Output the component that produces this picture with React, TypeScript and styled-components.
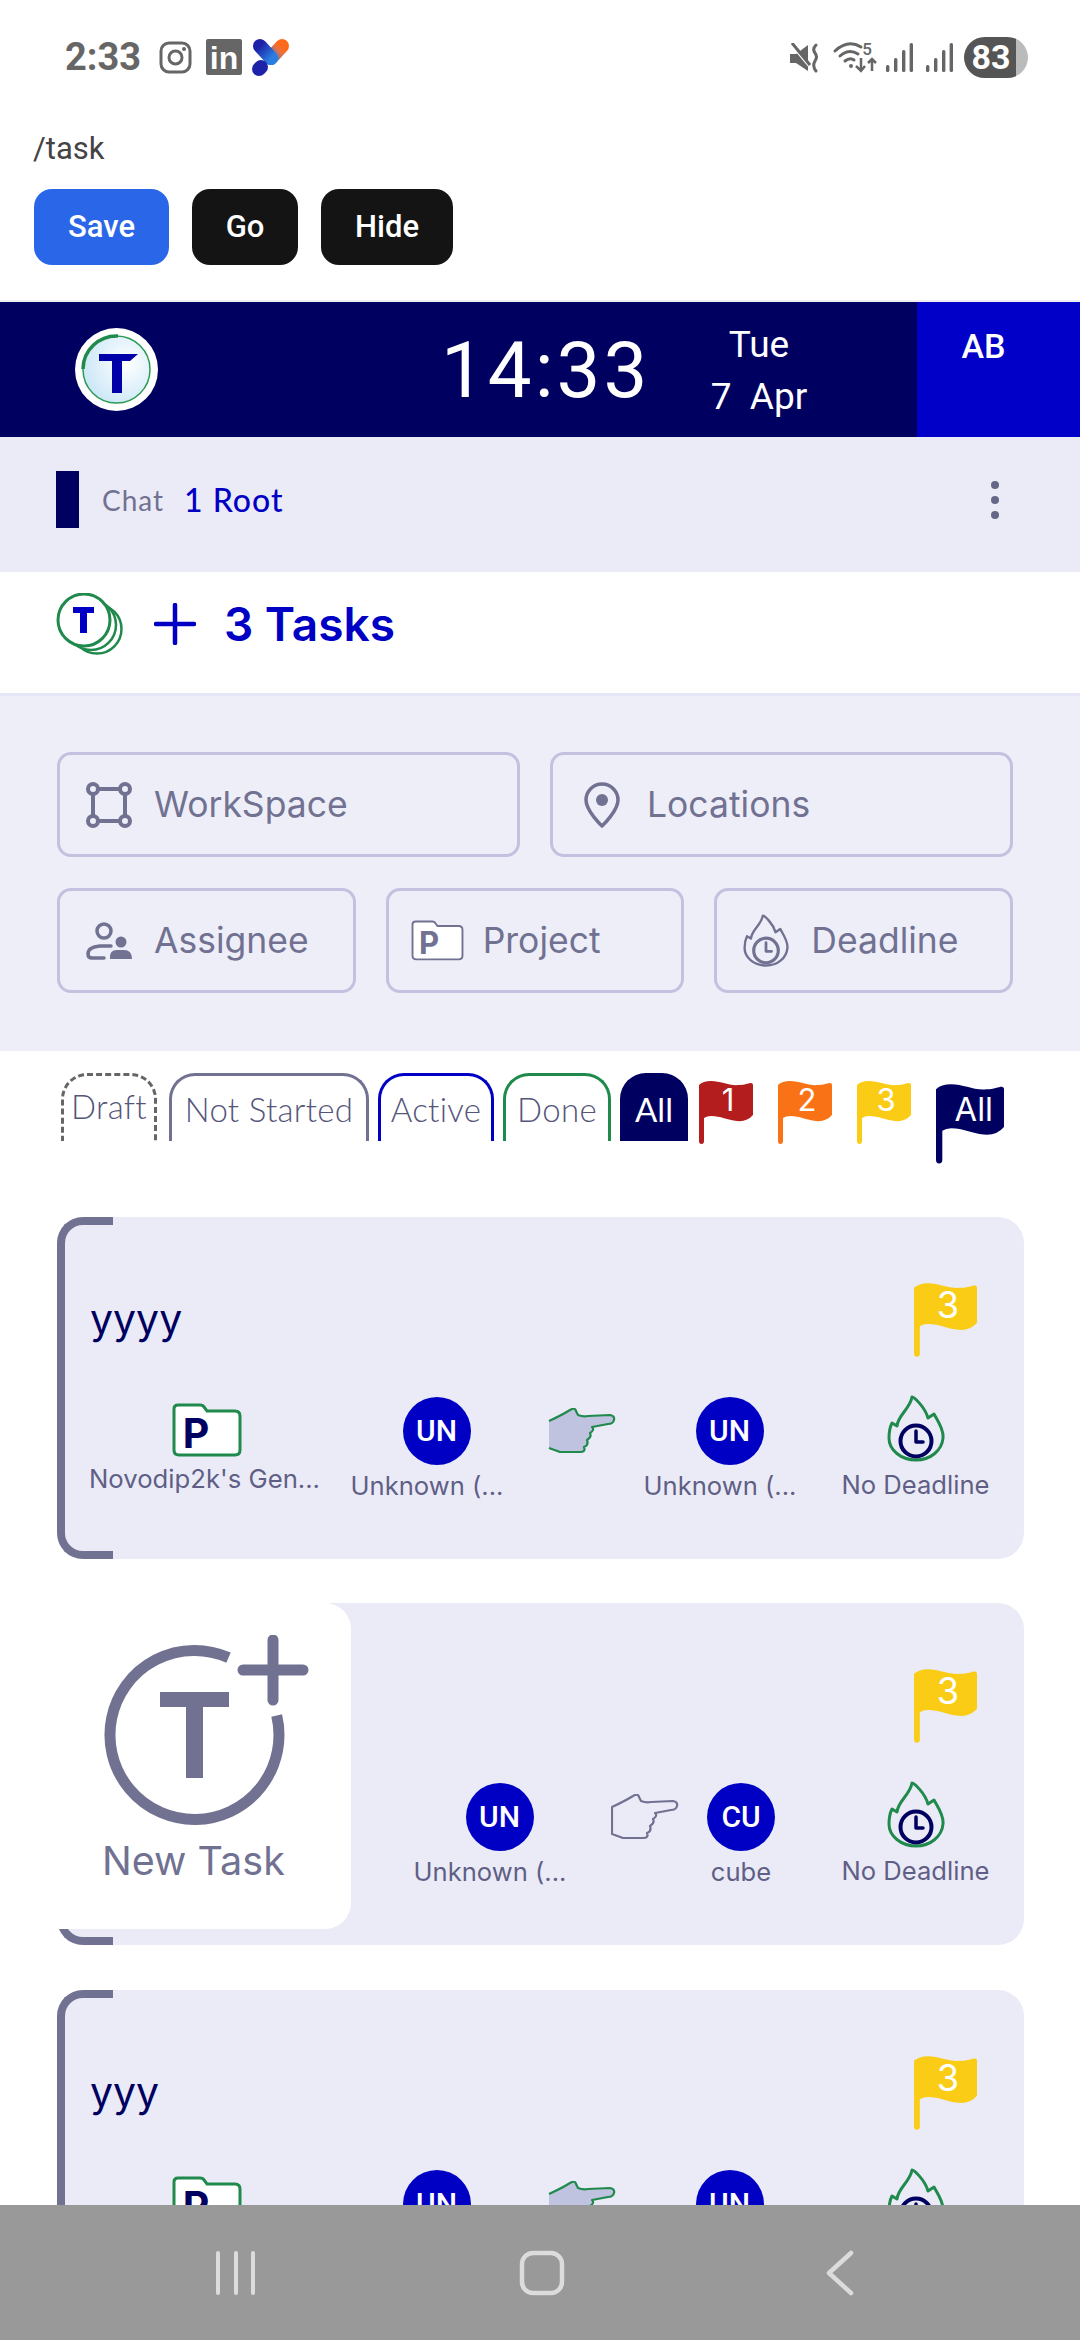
import React from 'react';
import styled, { createGlobalStyle } from 'styled-components';

const navy = '#000060';
const blue = '#0000c4';
const slate = '#717191';
const green = '#1f8a4c';

const flagPath =
  'M0 5Q4 1 12 1C22 1 30 6 40 5C46 5 50 3 52 3Q54 3 54 5V35Q48 42 38 41C28 40 22 36 12 36Q8 36 5 38V61Q5 64 2.5 64Q0 64 0 61Z';

const FlagIcon = ({ color, label, width = 54 }: { color: string; label: string; width?: number }) => (
  <svg width={width} height={(width * 64) / 54} viewBox="0 0 54 64" style={{ display: 'block', flex: 'none', overflow: 'visible' }}>
    <path d={flagPath} fill={color} />
    <text
      x={label === 'All' ? 30 : 29}
      y={label === 'All' ? 30 : 31}
      fill="#fff"
      fontFamily="Inter, sans-serif"
      fontSize={label === 'All' ? 26 : 31}
      textAnchor="middle"
    >
      {label}
    </text>
  </svg>
);

const FolderIcon = ({ stroke, letter, width, strokeWidth }: { stroke: string; letter: string; width: number; strokeWidth: number }) => (
  <svg width={width} height={(width * 54) / 70} viewBox="0 0 70 54" style={{ display: 'block', flex: 'none', overflow: 'visible' }}>
    <path
      d="M6 2H28Q31 2 32 4L35 8H63Q68 8 68 13V47Q68 52 63 52H7Q2 52 2 47V6Q2 2 6 2Z"
      fill="#fff"
      stroke={stroke}
      strokeWidth={strokeWidth}
    />
    <text x="24" y="44.5" fill={letter} fontFamily="Inter, sans-serif" fontWeight="700" fontSize="41" textAnchor="middle">
      P
    </text>
  </svg>
);

const FlameIcon = ({ stroke, clock, width = 58 }: { stroke: string; clock: string; width?: number }) => (
  <svg width={width} height={(width * 67) / 58} viewBox="0 0 58 67" fill="none" style={{ display: 'block', flex: 'none' }}>
    <path
      d="M25 2C27 2 38 12 41 23L47 19C50 25 57 34 56 43C55 55 44 65 29 65C14 65 2 55 2 43C2 37 3 32 5 28L10 31C11 20 23 14 25 2Z"
      stroke={stroke}
      strokeWidth="3"
      strokeLinejoin="round"
    />
    <circle cx="29" cy="46" r="15.5" stroke={clock} strokeWidth="4" />
    <path d="M29 36V47H36" stroke={clock} strokeWidth="3.5" strokeLinecap="round" strokeLinejoin="round" />
  </svg>
);

const HandIcon = ({ fill, stroke, closed }: { fill: string; stroke: string; closed?: boolean }) => (
  <svg width="68" height="46" viewBox="0 0 68 46" fill="none" style={{ display: 'block' }}>
    <path
      d={
        'M1 13Q14 7 22 2Q27 -1 28 3L30 7Q35 9 40 8L62 7Q67 8 66 12Q65 16 60 16L44 19Q47 22 42 25Q44 29 39 32Q41 37 36 39Q38 44 32 44L12 44L1 40' +
        (closed ? 'Z' : '')
      }
      fill={fill}
      stroke={stroke}
      strokeWidth="2.2"
      strokeLinejoin="round"
    />
  </svg>
);

const TaskItem = ({ project, from, to, toLabel, active }: {
  project?: boolean;
  from: string;
  to: string;
  toLabel: string;
  active: boolean;
}) => (
  <Meta>
    {project && (
      <ProjectCell>
        <IconSlot>
          <FolderIcon stroke={green} letter={navy} width={70} strokeWidth={3} />
        </IconSlot>
        <ProjectLabel>Novodip2k's Gen...</ProjectLabel>
      </ProjectCell>
    )}
    <PersonCell>
      <Avatar $shift>{from}</Avatar>
      <CellLabel>Unknown (...</CellLabel>
    </PersonCell>
    <HandSlot>
      {active ? <HandIcon fill="#bfc3df" stroke={green} /> : <HandIcon fill="none" stroke={slate} closed />}
    </HandSlot>
    <PersonCell $compact={toLabel === 'cube'}>
      <Avatar $shift={toLabel !== 'cube'}>{to}</Avatar>
      <CellLabel>{toLabel}</CellLabel>
    </PersonCell>
    <DeadlineCell>
      <FlameIcon stroke={green} clock={navy} />
      <CellLabel>No Deadline</CellLabel>
    </DeadlineCell>
  </Meta>
);

export default function App() {
  return (
    <Page>
      <GlobalStyle />
      <StatusBar>
        <StatusLeft>
          <Clock>2:33</Clock>
          <svg width="33" height="33" viewBox="0 0 33 33" fill="none">
            <rect x="2" y="2" width="29" height="29" rx="8" stroke="#666" strokeWidth="3" />
            <circle cx="16.5" cy="16.5" r="6.5" stroke="#666" strokeWidth="3" />
            <circle cx="25" cy="8" r="2" fill="#666" />
          </svg>
          <svg width="36" height="36" viewBox="0 0 36 36" style={{ overflow: 'visible' }}>
            <rect width="36" height="36" rx="2" fill="#666" />
            <text x="18" y="30" fill="#fff" fontFamily="Liberation Sans, sans-serif" fontWeight="700" fontSize="32" textAnchor="middle">
              in
            </text>
          </svg>
          <LogoMark width="38" height="39" viewBox="0 0 38 39" fill="none">
            <defs>
              <linearGradient id="logoA" x1="0" y1="0" x2="1" y2="1">
                <stop offset="0" stopColor="#1e22a8" />
                <stop offset="1" stopColor="#2a7de1" />
              </linearGradient>
              <linearGradient id="logoB" x1="0" y1="1" x2="1" y2="0">
                <stop offset="0" stopColor="#2a7de1" />
                <stop offset="0.7" stopColor="#f0703a" />
                <stop offset="1" stopColor="#ff6a1a" />
              </linearGradient>
            </defs>
            <path d="M19 20L30 8" stroke="url(#logoB)" strokeWidth="14" strokeLinecap="round" />
            <path d="M8 8L19 20" stroke="url(#logoA)" strokeWidth="14" strokeLinecap="round" />
            <path d="M7 31L9 29" stroke="#1e22a8" strokeWidth="14" strokeLinecap="round" />
          </LogoMark>
        </StatusLeft>
        <StatusRight>
          <svg width="30" height="30" viewBox="0 0 30 30" fill="none">
            <path d="M0 11H6L18 2V28L6 20H0Z" fill="#666" />
            <path d="M2 2L22 26" stroke="#fff" strokeWidth="3" />
            <path d="M2 0L20 22" stroke="#666" strokeWidth="3" />
            <path d="M26 2Q22 6 25 10Q28 14 25 18Q22 23 26 28" stroke="#666" strokeWidth="3" strokeLinecap="round" />
          </svg>
          <WifiIcon width="43" height="31" viewBox="0 0 43 31" fill="none">
            <path d="M1 9Q14 -3 27 5" stroke="#666" strokeWidth="3" strokeLinecap="round" />
            <path d="M6 14Q15 6 24 12" stroke="#666" strokeWidth="3" strokeLinecap="round" />
            <path d="M11 19Q16 15 20 18" stroke="#666" strokeWidth="3" strokeLinecap="round" />
            <circle cx="17" cy="24" r="2" fill="#666" />
            <text x="33" y="13" fill="#666" fontFamily="Roboto, sans-serif" fontWeight="500" fontSize="17" textAnchor="middle">
              5
            </text>
            <path d="M27 16V29M22 24L27 29L31 24" stroke="#666" strokeWidth="2.5" />
            <path d="M38 29V17M34 21L38 17L42 21" stroke="#666" strokeWidth="2.5" />
          </WifiIcon>
          <SignalIcon width="27" height="29" viewBox="0 0 27 29">
            <rect x="0" y="22" width="3.4" height="7" rx="1.5" fill="#666" />
            <rect x="8" y="15" width="3.4" height="14" rx="1.5" fill="#666" />
            <rect x="16" y="7" width="3.4" height="22" rx="1.5" fill="#666" />
            <rect x="23.6" y="0" width="3.4" height="29" rx="1.5" fill="#666" />
          </SignalIcon>
          <SignalIcon width="27" height="29" viewBox="0 0 27 29">
            <rect x="0" y="22" width="3.4" height="7" rx="1.5" fill="#666" />
            <rect x="8" y="15" width="3.4" height="14" rx="1.5" fill="#666" />
            <rect x="16" y="7" width="3.4" height="22" rx="1.5" fill="#666" />
            <rect x="23.6" y="0" width="3.4" height="29" rx="1.5" fill="#666" />
          </SignalIcon>
          <Battery>83</Battery>
        </StatusRight>
      </StatusBar>

      <BrowserBar>
        <RouteText>/task</RouteText>
        <BrowserButtons>
          <ActionButton $primary $width={135}>Save</ActionButton>
          <ActionButton $width={106}>Go</ActionButton>
          <ActionButton $width={132}>Hide</ActionButton>
        </BrowserButtons>
      </BrowserBar>

      <Header>
        <svg width="83" height="83" viewBox="0 0 83 83" fill="none">
          <defs>
            <radialGradient id="logoFill" cx="0.65" cy="0.4" r="0.7">
              <stop offset="0" stopColor="#ffffff" />
              <stop offset="1" stopColor="#c9e6f7" />
            </radialGradient>
          </defs>
          <circle cx="41.5" cy="41.5" r="41.5" fill="#fff" />
          <circle cx="41.5" cy="41.5" r="33.5" fill="url(#logoFill)" stroke="#2a9a55" strokeWidth="1.5" />
          <path d="M43 8A33.5 33.5 0 0 0 8 41" stroke={green} strokeWidth="3.5" />
          <path d="M24 26H63L55 33H47V65H37V33H24Z" fill="#0000a8" />
        </svg>
        <Time>14:33</Time>
        <DateBlock>
          <span>Tue</span>
          <DateLine>7&nbsp;&nbsp;Apr</DateLine>
        </DateBlock>
        <UserBlock>AB</UserBlock>
      </Header>

      <ChatBar>
        <ChatMark />
        <ChatLabel>Chat</ChatLabel>
        <ChatRoot>1 Root</ChatRoot>
        <Dots width="10" height="40" viewBox="0 0 10 40">
          <circle cx="5" cy="5" r="4" fill="#666686" />
          <circle cx="5" cy="20" r="4" fill="#666686" />
          <circle cx="5" cy="35" r="4" fill="#666686" />
        </Dots>
      </ChatBar>

      <TasksBar>
        <svg width="68" height="62" viewBox="0 0 68 62" fill="none">
          <circle cx="41" cy="36" r="24.5" fill="#fff" stroke={green} strokeWidth="2.5" />
          <circle cx="35" cy="32" r="25" fill="#fff" stroke={green} strokeWidth="2.5" />
          <circle cx="28" cy="27" r="26" fill="#fff" stroke={green} strokeWidth="3" />
          <path d="M17 14H38V20H31V40H24V20H17Z" fill={blue} />
        </svg>
        <svg width="42" height="42" viewBox="0 0 42 42" fill="none">
          <path d="M2 21H40M21 2V40" stroke={blue} strokeWidth="4.5" strokeLinecap="round" />
        </svg>
        <TasksTitle>3 Tasks</TasksTitle>
      </TasksBar>

      <FilterPanel>
        <FilterRow>
          <FilterField>
            <FieldIcon>
              <svg width="46" height="46" viewBox="0 0 46 46" fill="none">
                <rect x="7" y="7" width="32" height="32" stroke={slate} strokeWidth="4" />
                {[7, 39].map((cx) =>
                  [7, 39].map((cy) => (
                    <circle key={`${cx}-${cy}`} cx={cx} cy={cy} r="5" fill="#eeeef9" stroke={slate} strokeWidth="4" />
                  )),
                )}
              </svg>
            </FieldIcon>
            WorkSpace
          </FilterField>
          <FilterField>
            <FieldIcon>
              <svg width="36" height="46" viewBox="0 0 36 46" fill="none">
                <path
                  d="M18 44C18 44 34 29 34 18A16 16 0 0 0 2 18C2 29 18 44 18 44Z"
                  stroke={slate}
                  strokeWidth="3.5"
                  strokeLinejoin="round"
                />
                <circle cx="18" cy="18" r="6" fill={slate} />
              </svg>
            </FieldIcon>
            Locations
          </FilterField>
        </FilterRow>
        <FilterRow>
          <FilterField>
            <FieldIcon>
              <svg width="46" height="38" viewBox="0 0 46 38" fill="none">
                <circle cx="18" cy="9" r="7" stroke={slate} strokeWidth="3.5" />
                <circle cx="35" cy="20" r="5.5" fill={slate} />
                <path d="M25 24H14Q2 25 2 32Q2 36 6 36H18" stroke={slate} strokeWidth="3.5" strokeLinecap="round" />
                <path d="M24 37Q23 28 31 28H38Q46 28 46 37Z" fill={slate} />
              </svg>
            </FieldIcon>
            Assignee
          </FilterField>
          <FilterField $tight>
            <FolderSlot>
              <FolderIcon stroke={slate} letter={slate} width={53} strokeWidth={2.5} />
            </FolderSlot>
            Project
          </FilterField>
          <FilterField>
            <FlameIcon stroke={slate} clock={slate} width={46} />
            Deadline
          </FilterField>
        </FilterRow>
      </FilterPanel>

      <TabRow>
        <Tab $width={96} $dashed>Draft</Tab>
        <Tab $border={slate} $width={200}>Not Started</Tab>
        <Tab $border={blue} $width={116}>Active</Tab>
        <Tab $border={green} $width={108}>Done</Tab>
        <AllTab>All</AllTab>
        <PriorityFlags>
          <FlagIcon color="#b31d1d" label="1" />
          <FlagIcon color="#f97316" label="2" />
          <FlagIcon color="#facc15" label="3" />
          <AllFlag>
            <FlagIcon color={navy} label="All" width={68} />
          </AllFlag>
        </PriorityFlags>
      </TabRow>

      <CardList>
        <Card>
          <CardTop>
            <CardTitle>yyyy</CardTitle>
            <FlagIcon color="#facc15" label="3" width={63} />
          </CardTop>
          <TaskItem project from="UN" to="UN" toLabel="Unknown (..." active />
        </Card>
        <Card>
          <NewTask>
            <svg width="212" height="192" viewBox="0 0 212 192" fill="none">
              <path d="M130.5 22.6A84.5 84.5 0 1 0 178.7 80.5" stroke={slate} strokeWidth="11" />
              <path d="M62 57H131V72H105V143H88V72H62Z" fill={slate} />
              <path d="M145 35H205M175 5V65" stroke={slate} strokeWidth="11" strokeLinecap="round" />
            </svg>
            <NewTaskLabel>New Task</NewTaskLabel>
          </NewTask>
          <CardTop>
            <span />
            <FlagIcon color="#facc15" label="3" width={63} />
          </CardTop>
          <TaskItem from="UN" to="CU" toLabel="cube" active={false} />
        </Card>
        <Card>
          <CardTop>
            <CardTitle>yyy</CardTitle>
            <FlagIcon color="#facc15" label="3" width={63} />
          </CardTop>
          <TaskItem project from="UN" to="UN" toLabel="Unknown (..." active />
        </Card>
      </CardList>

      <NavBar>
        <svg width="42" height="46" viewBox="0 0 42 46" fill="none">
          <path d="M2 3V43M20 3V43M37 3V43" stroke="#dcdcdc" strokeWidth="4" strokeLinecap="round" />
        </svg>
        <svg width="46" height="46" viewBox="0 0 46 46" fill="none">
          <rect x="3" y="3" width="40" height="40" rx="11" stroke="#dcdcdc" strokeWidth="4.5" />
        </svg>
        <svg width="28" height="46" viewBox="0 0 28 46" fill="none">
          <path d="M25 3L3 23L25 43" stroke="#dcdcdc" strokeWidth="4.5" strokeLinecap="round" strokeLinejoin="round" />
        </svg>
      </NavBar>
    </Page>
  );
}

const GlobalStyle = createGlobalStyle`
  html, body {
    margin: 0;
    padding: 0;
    background: #fff;
    font-family: Inter, "Noto Sans", sans-serif;
  }
`;

const Page = styled.div`
  position: relative;
  width: 1080px;
  height: 2340px;
  overflow: hidden;
  background: #fff;
`;

const StatusBar = styled.div`
  height: 120px;
  display: flex;
  align-items: flex-start;
  justify-content: space-between;
  padding: 37px 52px 0 65px;
  box-sizing: border-box;
`;

const StatusLeft = styled.div`
  display: flex;
  align-items: center;
  gap: 14px;
`;

const Clock = styled.span`
  font: 700 38px/40px Roboto, sans-serif;
  color: #666;
  margin-right: 4px;
`;

const LogoMark = styled.svg`
  margin-left: -4px;
`;

const StatusRight = styled.div`
  display: flex;
  align-items: center;
  gap: 13px;
`;

const WifiIcon = styled.svg`
  margin: 0 -4px 0 1px;
  overflow: visible;
`;

const SignalIcon = styled.svg`
  display: block;
`;

const Battery = styled.div`
  width: 64px;
  height: 41px;
  border-radius: 21px;
  margin-left: -2px;
  background: linear-gradient(to right, #555 82%, #bbb 82%);
  color: #fff;
  font: 700 34px/41px Roboto, sans-serif;
  padding-right: 10px;
  box-sizing: border-box;
  text-align: center;
`;

const BrowserBar = styled.div`
  height: 182px;
  padding: 11px 0 0 33px;
  box-sizing: border-box;
  border-bottom: 2px solid #eeeef2;
`;

const RouteText = styled.div`
  font: 400 31px/36px Roboto, sans-serif;
  color: #444;
`;

const BrowserButtons = styled.div`
  display: flex;
  gap: 23px;
  margin: 22px 0 0 1px;
`;

const ActionButton = styled.div<{ $primary?: boolean; $width: number }>`
  width: ${(p) => p.$width}px;
  height: 76px;
  border-radius: 18px;
  background: ${(p) => (p.$primary ? '#2a67e8' : '#141414')};
  color: #fff;
  font: 500 31px/76px Roboto, sans-serif;
  text-align: center;
`;

const Header = styled.div`
  height: 135px;
  background: ${navy};
  display: flex;
  align-items: center;
  padding-left: 75px;
`;

const Time = styled.div`
  margin: 3px 0 0 283px;
  width: 208px;
  font: 400 78px/1 Roboto, sans-serif;
  letter-spacing: 3px;
  color: #fff;
`;

const DateBlock = styled.div`
  margin: 2px 0 0 50px;
  width: 120px;
  display: flex;
  flex-direction: column;
  align-items: center;
  gap: 12px;
  color: #fff;
  font: 400 37px/40px Roboto, sans-serif;
`;

const DateLine = styled.span`
  white-space: nowrap;
`;

const UserBlock = styled.div`
  align-self: stretch;
  margin-left: auto;
  width: 163px;
  background: #0000c8;
  color: #fff;
  font: 500 34px/1 Roboto, sans-serif;
  text-align: center;
  padding: 27px 30px 0 0;
  box-sizing: border-box;
`;

const ChatBar = styled.div`
  height: 135px;
  background: #ebebf7;
  display: flex;
  align-items: center;
  padding: 0 80px 10px 56px;
  box-sizing: border-box;
`;

const ChatMark = styled.div`
  width: 23px;
  height: 57px;
  background: ${navy};
`;

const ChatLabel = styled.span`
  margin-left: 23px;
  font: 400 28px/1 Lato, sans-serif;
  letter-spacing: 1px;
  color: ${slate};
`;

const ChatRoot = styled.span`
  margin-left: 20px;
  font: 500 32px/1 Lato, sans-serif;
  letter-spacing: 1px;
  color: ${blue};
`;

const Dots = styled.svg`
  margin-left: auto;
`;

const TasksBar = styled.div`
  height: 124px;
  border-bottom: 3px solid #e5e5f8;
  display: flex;
  align-items: center;
  padding: 0 0 18px 56px;
  box-sizing: border-box;
  gap: 30px;
`;

const TasksTitle = styled.span`
  font: 600 46px/1 Inter, sans-serif;
  color: ${blue};
  margin-left: -2px;
`;

const FilterPanel = styled.div`
  height: 355px;
  background: #eeeef9;
  padding: 56px 67px 0 57px;
  box-sizing: border-box;
  display: flex;
  flex-direction: column;
  gap: 31px;
`;

const FilterRow = styled.div`
  display: flex;
  gap: 30px;
`;

const FilterField = styled.div<{ $tight?: boolean }>`
  flex: 1;
  height: 105px;
  border: 3px solid #c2c2e0;
  border-radius: 14px;
  box-sizing: border-box;
  display: flex;
  align-items: center;
  gap: ${(p) => (p.$tight ? '19px' : '22px')};
  padding-left: 26px;
  font: 400 35.5px/1 Inter, sans-serif;
  color: ${slate};
`;

const FieldIcon = styled.div`
  width: 46px;
  display: flex;
  justify-content: center;
`;

const FolderSlot = styled.div`
  margin-left: -4px;
`;

const TabRow = styled.div`
  display: flex;
  align-items: flex-start;
  padding: 22px 0 0 61px;
  gap: 9px;
`;

const Tab = styled.div<{ $border?: string; $width: number; $dashed?: boolean }>`
  width: ${(p) => p.$width}px;
  height: 68px;
  box-sizing: border-box;
  border-radius: 26px 26px 0 0;
  border: 3px ${(p) => (p.$dashed ? 'dashed #666' : `solid ${p.$border}`)};
  border-bottom: none;
  color: #55557a;
  font: 300 33px/${(p) => (p.$dashed ? '60px' : '66px')} Lato, sans-serif;
  letter-spacing: 0.3px;
  text-align: center;
  margin-right: ${(p) => (p.$dashed ? '3px' : '0')};
`;

const AllTab = styled.div`
  width: 68px;
  height: 68px;
  border-radius: 26px 26px 0 0;
  background: ${navy};
  color: #fff;
  font: 400 33px/72px Lato, sans-serif;
  text-align: center;
`;

const PriorityFlags = styled.div`
  display: flex;
  gap: 25px;
  margin: 7px 0 0 2px;
`;

const AllFlag = styled.div`
  margin: 3px 0 0 0;
`;

const CardList = styled.div`
  display: flex;
  flex-direction: column;
  gap: 44.5px;
  margin: 0 56px 0 57px;
  padding-top: 53px;
`;

const Card = styled.div`
  position: relative;
  height: 342px;
  flex: none;
  background: #ebebf8;
  border-radius: 26px;
  padding-top: 65px;
  box-sizing: border-box;

  &::before {
    content: '';
    position: absolute;
    left: 0;
    top: 0;
    bottom: 0;
    width: 56px;
    box-sizing: border-box;
    border: 8px solid ${slate};
    border-right: none;
    border-radius: 26px 0 0 26px;
  }
`;

const CardTop = styled.div`
  display: flex;
  justify-content: space-between;
  align-items: center;
  height: 75px;
  padding: 0 47px 0 33px;
`;

const CardTitle = styled.div`
  font: 400 41px/1 Inter, sans-serif;
  color: ${navy};
`;

const Meta = styled.div`
  display: flex;
  justify-content: flex-end;
  align-items: flex-start;
  margin-top: 38px;
  padding-right: 34px;
`;

const IconSlot = styled.div`
  height: 62px;
  padding: 8px 0 0 4px;
  box-sizing: border-box;
`;

const ProjectCell = styled.div`
  width: 231px;
  margin-right: 31px;
  display: flex;
  flex-direction: column;
  align-items: center;
`;

const ProjectLabel = styled.div`
  margin-top: 7px;
  font: 400 25.7px/30px Inter, sans-serif;
  color: #5f5f85;
  white-space: nowrap;
`;

const PersonCell = styled.div<{ $compact?: boolean }>`
  width: ${(p) => (p.$compact ? '68px' : '152px')};
  margin-right: ${(p) => (p.$compact ? '66px' : '45px')};
  display: flex;
  flex-direction: column;
  align-items: center;
`;

const Avatar = styled.div<{ $shift?: boolean }>`
  width: 68px;
  height: 68px;
  border-radius: 50%;
  background: #0000c4;
  color: #fff;
  font: 500 30px/68px Roboto, sans-serif;
  text-align: center;
  margin: 2px 0 5px ${(p) => (p.$shift ? '19px' : '0')};
`;

const CellLabel = styled.div`
  font: 400 25.6px/32px Inter, sans-serif;
  color: #5f5f85;
  white-space: nowrap;
`;

const HandSlot = styled.div`
  margin: 13px 28px 0 0;
`;

const DeadlineCell = styled.div`
  width: 149px;
  display: flex;
  flex-direction: column;
  align-items: center;
  gap: 7px;
`;

const NewTask = styled.div`
  position: absolute;
  z-index: 2;
  left: -57px;
  top: 0;
  width: 351px;
  height: 326px;
  background: #fff;
  border-radius: 0 26px 26px 0;
  display: flex;
  flex-direction: column;
  align-items: flex-start;
  padding: 32px 0 0 98px;
  box-sizing: border-box;
`;

const NewTaskLabel = styled.div`
  margin: 15px 0 0 4px;
  font: 400 39.5px/1 Inter, sans-serif;
  color: ${slate};
`;

const NavBar = styled.div`
  position: absolute;
  left: 0;
  right: 0;
  bottom: 0;
  height: 135px;
  background: #999;
  display: flex;
  align-items: center;
  justify-content: space-between;
  padding: 0 226px 0 216px;
  box-sizing: border-box;
`;
